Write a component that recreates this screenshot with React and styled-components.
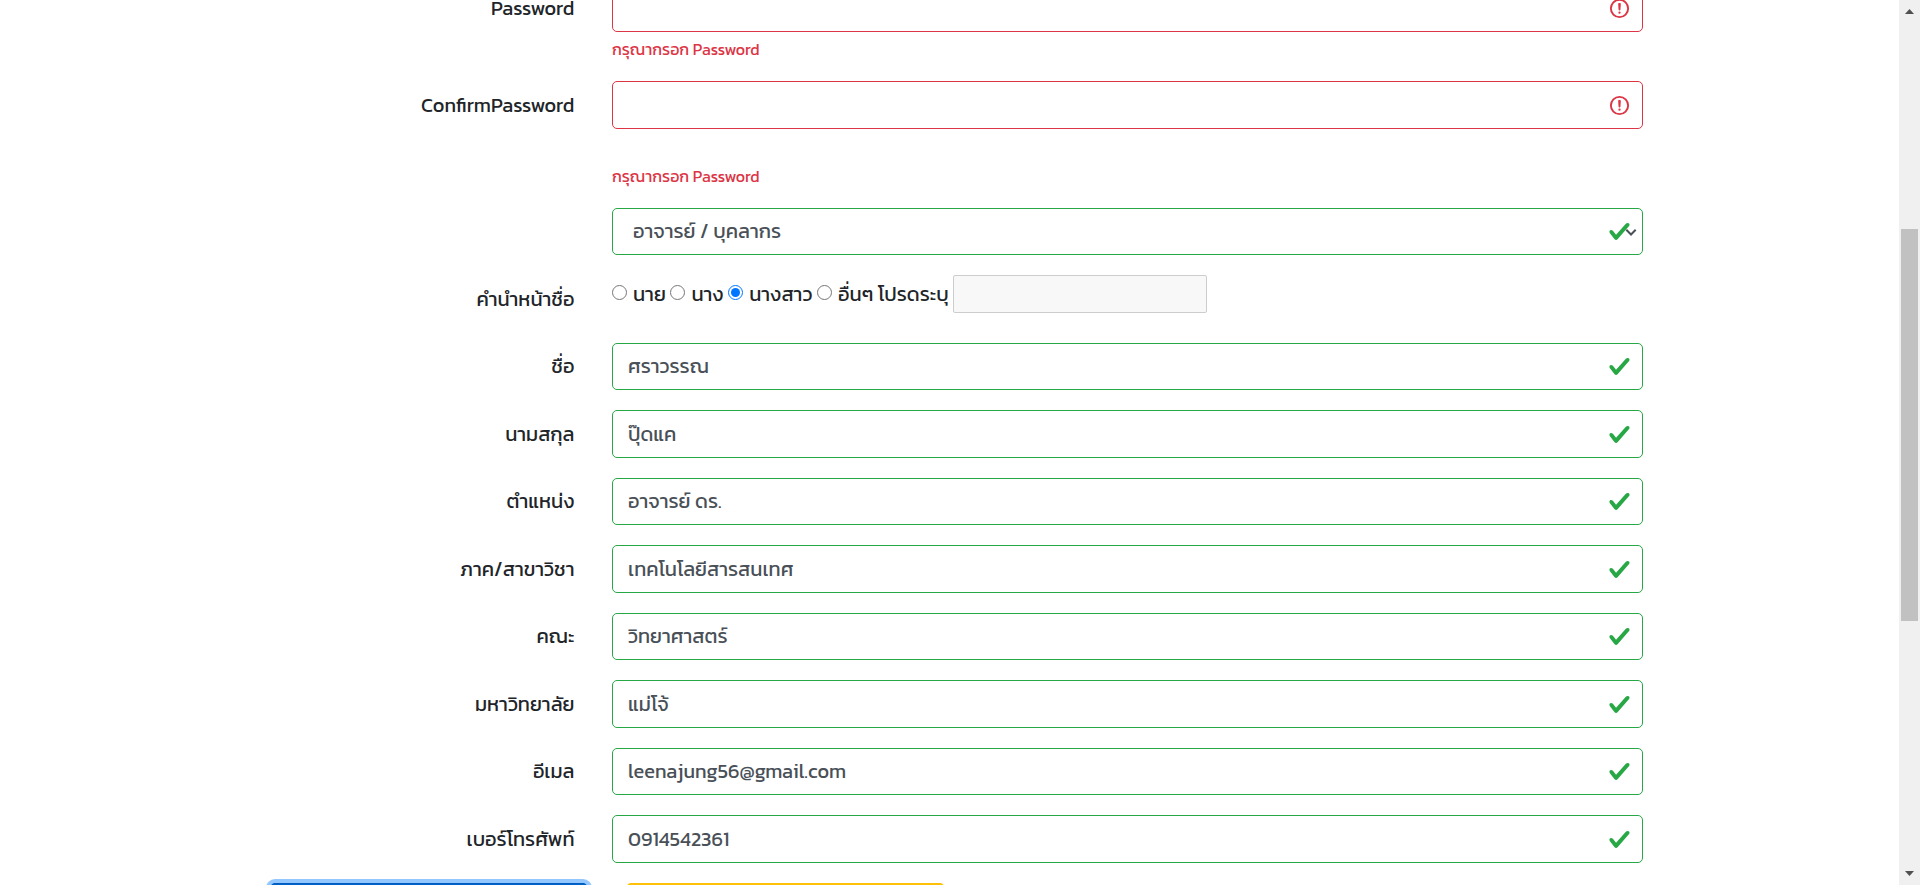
import React from 'react';
import styled, { createGlobalStyle } from 'styled-components';

const Global = createGlobalStyle`
  *, *::before, *::after { box-sizing: border-box; }
  html, body { margin: 0; height: 100%; overflow: hidden; background: #fff; }
  body {
    font-family: Kanit, "Noto Sans", sans-serif;
    font-size: 20px;
    font-weight: 400;
    line-height: 1.5;
    color: #212529;
  }
`;

const Screen = styled.div`
  display: flex;
  width: 100%;
  height: 100vh;
  overflow: hidden;
`;

const Viewport = styled.main`
  flex: 1;
  min-width: 0;
  overflow: hidden;
`;

const Form = styled.form`
  width: 1425px;
  margin: -15.25px auto 0;
`;

const Row = styled.div`
  display: flex;
  margin-bottom: 20px;
`;

const Label = styled.label`
  width: 25%;
  padding: 8.5px 18.75px;
  line-height: 30px;
  height: 47.5px;
  text-align: right;
`;

const Column = styled.div`
  width: 75%;
  padding: 0 18.75px;
`;

const Control = styled.div`
  position: relative;
  display: flex;
  align-items: center;
  height: 47.5px;
  border: 1px solid ${(p) => (p.$invalid ? '#dc3545' : '#28a745')};
  border-radius: 5px;
  background: #fff;
`;

const Input = styled.input`
  flex: 1;
  min-width: 0;
  height: 100%;
  padding: 0 15px 1px;
  border: 0;
  outline: 0;
  background: transparent;
  color: #495057;
  font: inherit;
`;

const SelectValue = styled.div`
  flex: 1;
  padding: 0 20px 1px;
  color: #495057;
`;

const StatusIcon = styled.svg`
  flex: none;
  width: 23px;
  height: 23px;
  margin-right: 11.75px;
`;

const Chevron = styled.svg`
  position: absolute;
  right: 5.5px;
  top: 19px;
  width: 12px;
  height: 9px;
`;

const ErrorText = styled.div`
  margin-top: ${(p) => (p.$spaced ? '35px' : '5px')};
  font-size: 16px;
  line-height: 24px;
  color: #dc3545;
`;

const TitleOptions = styled.div`
  display: flex;
  align-items: center;
  height: 37.5px;
`;

const Option = styled.label`
  display: flex;
  align-items: center;
  margin-right: 4.6px;
  white-space: pre;
`;

const Radio = styled.input`
  width: 15px;
  height: 15px;
  margin: 0 6px 3px 0;
`;

const OtherInput = styled.input`
  width: 254px;
  height: 37.5px;
  border: 1px solid #cdcdcd;
  border-radius: 2px;
  background: #f8f8f8;
`;

const Actions = styled.div`
  display: flex;
  gap: 37.5px;
  padding-left: 32.5px;
`;

const Button = styled.button`
  width: 318.75px;
  height: 47.5px;
  border: 1px solid ${(p) => (p.$primary ? '#005cbf' : '#ffc107')};
  border-radius: 5px;
  background: ${(p) => (p.$primary ? '#0062cc' : '#ffc107')};
  box-shadow: ${(p) => (p.$primary ? '0 0 0 4px rgba(38, 143, 255, 0.5)' : 'none')};
`;

const ScrollBar = styled.div`
  display: flex;
  flex-direction: column;
  align-items: center;
  width: 21px;
  background: #f0f0f0;
`;

const Arrow = styled.svg`
  width: 9px;
  height: 5px;
  margin: ${(p) => (p.$down ? 'auto 0 9px' : '9px 0 0')};
`;

const Thumb = styled.div`
  width: 17px;
  height: 392px;
  margin-top: 215px;
  background: #c1c1c1;
`;

const Check = () => (
  <StatusIcon viewBox="0 0 8 8">
    <path
      fill="#28a745"
      d="M2.3 6.73L.6 4.53c-.4-1.04.46-1.4 1.1-.8l1.1 1.4 3.4-3.8c.6-.63 1.6-.27 1.2.7l-4 4.6c-.43.5-.8.4-1.1.1z"
    />
  </StatusIcon>
);

const Warning = () => (
  <StatusIcon viewBox="0 0 12 12" fill="none" stroke="#dc3545">
    <circle cx="6" cy="6" r="4.5" />
    <path strokeLinejoin="round" d="M5.8 3.6h.4L6 6.5z" />
    <circle cx="6" cy="8.2" r=".6" fill="#dc3545" stroke="none" />
  </StatusIcon>
);

const PasswordRow = ({ label, spaced }) => (
  <Row>
    <Label>{label}</Label>
    <Column>
      <Control $invalid>
        <Input type="password" />
        <Warning />
      </Control>
      <ErrorText $spaced={spaced}>กรุณากรอก Password</ErrorText>
    </Column>
  </Row>
);

const fields = [
  ['ชื่อ', 'ศราวรรณ'],
  ['นามสกุล', 'ปุ๊ดแค'],
  ['ตำแหน่ง', 'อาจารย์ ดร.'],
  ['ภาค/สาขาวิชา', 'เทคโนโลยีสารสนเทศ'],
  ['คณะ', 'วิทยาศาสตร์'],
  ['มหาวิทยาลัย', 'แม่โจ้'],
  ['อีเมล', 'leenajung56@gmail.com'],
  ['เบอร์โทรศัพท์', '0914542361'],
];

const titles = ['นาย', 'นาง', 'นางสาว', 'อื่นๆ โปรดระบุ'];

export default function App() {
  return (
    <>
      <Global />
      <Screen>
        <Viewport>
          <Form>
            <PasswordRow label="Password" />
            <PasswordRow label="ConfirmPassword" spaced />
            <Row>
              <Label />
              <Column>
                <Control>
                  <SelectValue>อาจารย์ / บุคลากร</SelectValue>
                  <Check />
                  <Chevron viewBox="0 0 12 9" fill="none" stroke="#495057" strokeWidth="2">
                    <path d="M1.3 1.8L6 6.5l4.7-4.7" />
                  </Chevron>
                </Control>
              </Column>
            </Row>
            <Row>
              <Label>คำนำหน้าชื่อ</Label>
              <Column>
                <TitleOptions>
                  {titles.map((title) => (
                    <Option key={title}>
                      <Radio type="radio" name="title" defaultChecked={title === 'นางสาว'} />
                      {title}
                    </Option>
                  ))}
                  <OtherInput disabled />
                </TitleOptions>
              </Column>
            </Row>
            {fields.map(([label, value]) => (
              <Row key={label}>
                <Label>{label}</Label>
                <Column>
                  <Control>
                    <Input defaultValue={value} />
                    <Check />
                  </Control>
                </Column>
              </Row>
            ))}
            <Actions>
              <Button type="button" $primary />
              <Button type="button" />
            </Actions>
          </Form>
        </Viewport>
        <ScrollBar>
          <Arrow viewBox="0 0 9 5"><path d="M0 5L4.5 0 9 5z" fill="#505050" /></Arrow>
          <Thumb />
          <Arrow $down viewBox="0 0 9 5"><path d="M0 0h9L4.5 5z" fill="#505050" /></Arrow>
        </ScrollBar>
      </Screen>
    </>
  );
}
